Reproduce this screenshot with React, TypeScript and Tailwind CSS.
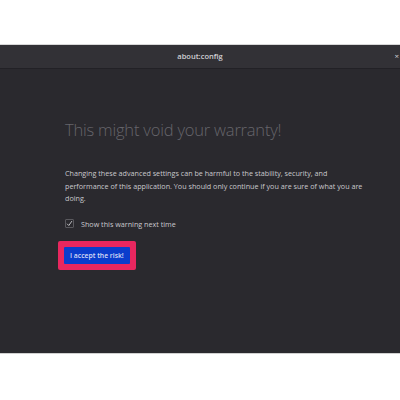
export default function App() {
  return (
    <div className="w-[400px] h-[400px] bg-white overflow-hidden" style={{ fontFamily: '"Open Sans", "Noto Sans", sans-serif' }}>
      <div className="h-[45px] bg-white border-b border-[#d8d8d8]" />
      <div className="h-[308px] bg-[#2a292e] flex flex-col">
        <div className="h-[24px] bg-[#323136] border-b border-[#222126] flex items-center relative">
          <div className="flex-1 text-center text-[7.5px] font-semibold text-[#d0d0d4]">about:config</div>
          <div className="absolute right-[1px] top-[7px] text-[8px] leading-none text-[#d0d0d4]">×</div>
        </div>
        <div className="pl-[65px] pr-[10px] pt-[50px]">
          <h1 className="text-[16.5px] font-light text-[#66656b] leading-[22px] tracking-[-0.2px]">This might void your warranty!</h1>
          <p className="mt-[26px] text-[7.2px] leading-[12.5px] text-[#c9c8cd] whitespace-nowrap">
            Changing these advanced settings can be harmful to the stability, security, and
            <br />
            performance of this application. You should only continue if you are sure of what you are
            <br />
            doing.
          </p>
          <div className="mt-[14px] flex items-center gap-[7px]">
            <div className="w-[9px] h-[9px] border border-[#5a595e] rounded-[1px] flex items-center justify-center">
              <svg width="7" height="7" viewBox="0 0 8 8">
                <path d="M1.2 4.3 L3.2 6.3 L6.8 1.2" fill="none" stroke="#d0d0d4" strokeWidth="1" />
              </svg>
            </div>
            <span className="text-[7.2px] text-[#c9c8cd]">Show this warning next time</span>
          </div>
          <div className="mt-[12px] ml-[-7px] inline-block p-[6px] bg-[#e8275f] rounded-[2px]">
            <div className="bg-[#0a3dcc] px-[6px] h-[17px] flex items-center text-[6.8px] font-semibold text-[#d9def5] rounded-[1px]">
              I accept the risk!
            </div>
          </div>
        </div>
      </div>
      <div className="border-t border-[#d0d0d0]" />
    </div>
  );
}
